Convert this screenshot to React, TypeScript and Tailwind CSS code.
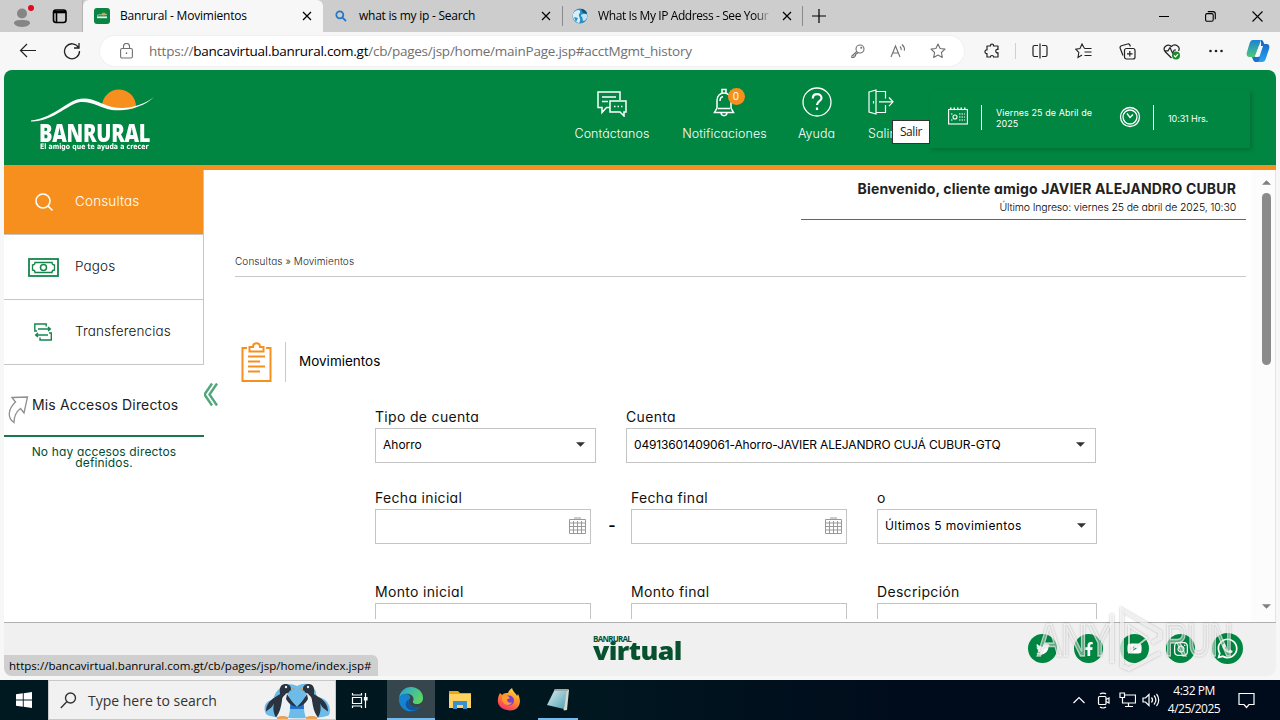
import type { ReactNode } from "react";
import clsx from "clsx";
import {
  FaTwitter,
  FaFacebookF,
  FaYoutube,
  FaInstagram,
  FaWhatsapp,
} from "react-icons/fa";

interface IconProps {
  className?: string;
}

interface SvgProps extends IconProps {
  w: number;
  h: number;
  sw?: number;
  children: ReactNode;
}

// Stroke-only icon, drawn at 1:1 pixel size
const Line = ({ w, h, sw = 1, className, children }: SvgProps) => (
  <svg
    width={w}
    height={h}
    viewBox={`0 0 ${w} ${h}`}
    fill="none"
    stroke="currentColor"
    strokeWidth={sw}
    className={clsx("shrink-0", className)}
  >
    {children}
  </svg>
);

const CloseIcon = ({ className }: IconProps) => (
  <Line w={10} h={10} sw={1.2} className={className}>
    <path d="M1 1 9 9M9 1 1 9" />
  </Line>
);

const Caret = ({ className }: IconProps) => (
  <svg width="9" height="5" viewBox="0 0 9 5" className={className}>
    <path d="M0 0.3h9L4.5 4.8z" fill="currentColor" />
  </svg>
);

/* ---------- browser chrome ---------- */

const TabBar = () => (
  <div className="h-8 flex bg-[#cdcdcd] text-black text-[12px]">
    <div className="w-[83px] flex items-center pl-[13px] border-r border-[#b5b5b5]">
      <svg width="22" height="24" viewBox="0 0 22 24">
        <circle cx="9" cy="9.5" r="5" fill="#858585" />
        <path d="M1 19.5c0-3 2.800-3.500 8-3.500s8 .5 8 3.500c-1.500 2.600-5 3.500-8 3.500s-6.500-.9-8-3.500z" fill="#858585" />
        <circle cx="18" cy="4" r="3" fill="#e00b1c" />
      </svg>
      <Line w={16} h={16} sw={1.6} className="ml-[17px]">
        <rect x="1.500" y="2" width="12.500" height="12.500" rx="2.500" />
        <path d="M1.500 4h12.500" strokeWidth="2.600" />
        <path d="M4.500 3v11" />
      </Line>
    </div>

    <div className="w-[240px] flex items-center bg-[#f7f7f7] rounded-t-md">
      <svg width="16" height="16" viewBox="0 0 16 16" className="ml-[11px]">
        <rect width="16" height="16" rx="3" fill="#0a8543" />
        <path d="M7.500 6.800a2.200 2.200 0 0 1 4.400 0z" fill="#f78f1e" />
        <path d="M3 7.500c3-2 6 .5 10-1" stroke="#cfe6d2" strokeWidth=".7" fill="none" />
        <path d="M3 9.300h10" stroke="#e8f3e9" strokeWidth="1.800" fill="none" />
      </svg>
      <span className="ml-[10px] w-[182px] tracking-[-0.200px]">Banrural - Movimientos</span>
      <CloseIcon />
    </div>

    <div className="w-[239px] flex items-center">
      <svg width="12" height="12" viewBox="0 0 12 12" className="ml-[12px]" fill="none" stroke="#2878c8" strokeWidth="1.800">
        <circle cx="4.800" cy="4.800" r="3.500" />
        <path d="M7.300 7.300 11 11" />
      </svg>
      <span className="ml-[12px] w-[182px] tracking-[-0.240px]">what is my ip - Search</span>
      <CloseIcon />
    </div>

    <div className="my-[6px] w-[241px] flex items-center border-x border-[#8a8a8a]">
      <svg width="18" height="18" viewBox="0 0 18 18" className="ml-[8px]">
        <circle cx="9" cy="9" r="7.500" fill="#2a8fc4" />
        <path d="M2 7c2-4 6-5 7-3s-2 3-1 5 2 5 0 7c-4-1-7-5-6-9z" fill="#d8eef8" />
        <path d="M10 8c2-1 5-2 6 0s-1 5-3 6c-2 0-1-3-2-4s-1-1-1-2z" fill="#bfe3f3" />
        <path d="M10 2c3 0 6 2 6 5l-4-1z" fill="#12577f" />
        <path d="M3 10l4 1-2 4z" fill="#2a8fc4" />
      </svg>
      <span className="ml-[9px] w-[174px] whitespace-nowrap tracking-[-0.400px] [mask-image:linear-gradient(90deg,#000_90%,transparent)]">
        What Is My IP Address - See Your
      </span>
      <CloseIcon className="ml-[10px]" />
    </div>

    <Line w={14} h={14} sw={1.2} className="ml-[9px] mt-[9px]">
      <path d="M7 0v14M0 7h14" />
    </Line>

    <div className="ml-auto flex items-center gap-[36px] pr-[17px]">
      <Line w={10} h={10} sw={1}><path d="M0 5.500h10" /></Line>
      <Line w={11} h={11} sw={1.1}>
        <rect x="0.600" y="2.600" width="7.600" height="7.600" rx="1.500" />
        <path d="M2.800.600H8a2.300 2.300 0 0 1 2.300 2.300v5.300" />
      </Line>
      <Line w={11} h={11} sw={1.1}><path d="M.5.500 10.500 10.500M10.500.500.500 10.500" /></Line>
    </div>
  </div>
);

const StarIcon = ({ className }: IconProps) => (
  <Line w={16} h={16} sw={1.1} className={className}>
    <path d="M8 1l2.100 4.500 4.900.6-3.600 3.400.9 4.900L8 12l-4.300 2.400.9-4.900L1 6.100l4.900-.6z" strokeLinejoin="round" />
  </Line>
);

const Toolbar = () => (
  <div className="h-[38px] flex items-center text-[#222]">
    <Line w={18} h={16} sw={1.2} className="ml-[19px]">
      <path d="M8 1 1.500 7.500 8 14M1.500 7.500H17" />
    </Line>
    <Line w={18} h={18} sw={1.3} className="ml-[26px]">
      <path d="M15.500 5.500A7.500 7.500 0 1 0 16.500 9M16 1v5h-5" />
    </Line>

    <div className="ml-[19px] w-[864px] h-[30px] rounded-full bg-white flex items-center pl-[20px] ring-1 ring-[#f0f0f0] text-[#707070]">
      <Line w={13} h={16} sw={1.1}>
        <rect x="0.600" y="5.500" width="11.800" height="9.500" rx="1.500" />
        <path d="M3.500 5.500V3.500a3 3 0 0 1 6 0v2" />
        <path d="M5.800 10.200h1.400" strokeWidth="1.600" />
      </Line>
      <span className="ml-[16px] w-[702px] text-[13.500px] tracking-[-0.240px]">
        https://<span className="text-black">bancavirtual.banrural.com.gt</span>/cb/pages/jsp/home/mainPage.jsp#acctMgmt_history
      </span>
      <Line w={14} h={14} sw={1.100}>
        <circle cx="9" cy="5" r="4" />
        <circle cx="10.300" cy="3.700" r=".5" />
        <path d="M5.800 7.500.800 12v1.500H3V12h1.500v-1.500L7 8.700" />
      </Line>
      <Line w={16} h={16} sw={1.100} className="ml-[25px]">
        <path d="M1 14 5.500 3 10 14M2.800 10h5.500M10 3.500c1 1 1.400 2.300 1.200 3.700M12 1.500c1.900 1.700 2.800 3.800 2.400 6.200" />
      </Line>
      <StarIcon className="ml-[24px]" />
    </div>

    <Line w={16} h={16} sw={1.200} className="ml-[20px]">
      <path d="M3 3h3.500C6 .3 10 .3 9.500 3H14v3.500c-3-.8-3 4 0 3.200V14H9.500c.4-2-3.400-2-3 0H3v-3.500C.3 11 .3 6.500 3 7z" strokeLinejoin="round" />
    </Line>
    <div className="ml-[15px] w-px h-[16px] bg-[#d0d0d0]" />
    <Line w={16} h={16} sw={1.200} className="ml-[16px]">
      <path d="M6 2.500H2.500a1.500 1.500 0 0 0-1.500 1.500v8a1.500 1.500 0 0 0 1.500 1.500H6M8 .5v15M10 2.500h3.500a1.500 1.500 0 0 1 1.500 1.500v8a1.500 1.500 0 0 1-1.500 1.500H10" />
    </Line>
    <Line w={17} h={16} sw={1.100} className="ml-[27px]">
      <path d="M9.500 5.500 7 1 5 5.500l-4.200.7 3 3.300-.8 5L7 12M9.500 5.500h7M9.500 9h7M9.500 12.500h7" />
    </Line>
    <Line w={17} h={17} sw={1.200} className="ml-[27px]">
      <rect x="5.500" y="5.500" width="10.500" height="10.500" rx="2" />
      <path d="M10.800 8v5.500M8 10.800h5.500M4 12.500 1.200 5.200A2 2 0 0 1 2.500 2.700L8.500 1a2 2 0 0 1 2.500 1.300l.3 1.200" />
    </Line>
    <svg width="18" height="17" viewBox="0 0 18 17" fill="none" stroke="currentColor" strokeWidth="1.200" className="ml-[27px]">
      <path d="M8.500 15 2 8.500C-1 4 5 0 8.500 3.500 12 0 18 3.500 15.500 8M2 7.800h3L7 4.500l2.500 5.500 1.800-3H13" />
      <circle cx="13" cy="12.500" r="4" fill="#1d8a2c" stroke="none" />
      <path d="m11 12.500 1.500 1.500 2.500-2.800" stroke="#fff" />
    </svg>
    <svg width="14" height="4" viewBox="0 0 14 4" fill="currentColor" className="ml-[28px]">
      <circle cx="1.500" cy="2" r="1.300" />
      <circle cx="7" cy="2" r="1.300" />
      <circle cx="12.500" cy="2" r="1.300" />
    </svg>
    <svg width="24" height="24" viewBox="0 0 24 24" className="ml-[23px]">
      <defs>
        <linearGradient id="copilotLeft" x1="0" y1="0" x2="0" y2="1">
          <stop offset="0" stopColor="#1c83d6" />
          <stop offset="1" stopColor="#4fc878" />
        </linearGradient>
        <linearGradient id="copilotRight" x1="0" y1="0" x2="0" y2="1">
          <stop offset="0" stopColor="#1560c4" />
          <stop offset="1" stopColor="#29a4ee" />
        </linearGradient>
      </defs>
      <path d="M15 1c2 0 2.500 2 3.200 4H20c3 0 4 2 3 5l-3 9c-1 3-2 4-4 4h-5l4-15z" fill="url(#copilotRight)" />
      <path d="M7 1h8l-6 17H4c-3 0-4-2-3-5l2.500-8.500C4.300 2 5.300 1 7 1z" fill="url(#copilotLeft)" />
      <path d="M13 7h4l-3.500 10.500H8.800z" fill="#f7f7f7" />
      <path d="M6 18h8l-1 3.500c-.5 1.200-1.300 1.500-3 1.500-2.500 0-3-2.500-4-5z" fill="#1f6fd0" />
    </svg>
  </div>
);

/* ---------- bank page ---------- */

const Logo = () => (
  <div className="ml-[26px] mt-[17px] w-[124px] text-white">
    <svg width="124" height="36" viewBox="0 0 124 36" className="block">
      <path d="M72 19a17 17 0 1 1 34 1c-10 5-23 4-34-1z" fill="#f78f1e" />
      <path d="M1 33.500C20 32 36 16 47 12.500 61 8.500 71 17.500 82 20c15 3 30-1 42-10-9 9-25 14.500-42 13C70 21 60 13 48 15.500 36 19 21 35 1 34.500z" fill="#fff" />
    </svg>
    <div className="ml-[9px] h-[18px] text-[25px] leading-[18px] font-black font-['Open_Sans'] origin-left scale-x-[0.800] tracking-[-0.300px]">
      BANRURAL
    </div>
    <div className="ml-[10px] mt-[1px] text-[7.500px] leading-[9px] font-black font-['DejaVu_Sans'] origin-left whitespace-nowrap scale-x-[0.830]">
      El amigo que te ayuda a crecer
    </div>
  </div>
);

interface NavItemProps {
  label: string;
  width: string;
  children: ReactNode;
}

const NavItem = ({ label, width, children }: NavItemProps) => (
  <div className={clsx("flex flex-col items-center", width)}>
    <div className="h-[36px] flex items-center">{children}</div>
    <span className="mt-[5px] text-[12.500px] leading-[18px] font-light whitespace-nowrap tracking-[0.060px]">{label}</span>
  </div>
);

const Header = () => (
  <header className="h-[100px] relative flex bg-[#008641] border-b-[5px] border-[#f78f1e] text-white">
    <Logo />
    <nav className="ml-[420px] mt-[14px] flex">
      <NavItem label="Contáctanos" width="w-[76px]">
        <Line w={30} h={26} sw={1.500} className="mt-[4px]">
          <path d="M13 16.500H9.500L5 21.500v-5H1V1h22v8M5 6h14M5 10.500h6" />
          <path d="M13 10h16v11h-2v4l-4-4H13z" />
          <path d="M17 15.500h9" strokeDasharray="1.500 2" />
        </Line>
      </NavItem>
      <NavItem label="Notificaciones" width="w-[83px] ml-[33px]">
        <div className="relative">
          <Line w={22} h={29} sw={1.500} className="-ml-[2px]">
            <path d="M9 5V1.500h4V5M4 20v-7.500C4 8 7 5 11 5s7 3 7 7.500V20l2.500 4.500h-19zM8 25c.5 3.500 5.500 3.500 6 0M7 13c0-2.500 1-4 3-4.500M5 20.500h12" />
          </Line>
          <span className="absolute left-[13px] top-0 w-[17px] h-[17px] rounded-full bg-[#f78f1e] text-[10px] leading-[17px] text-center">0</span>
        </div>
      </NavItem>
      <NavItem label="Ayuda" width="w-[37px] ml-[32px]">
        <Line w={30} h={30} sw={1.300}>
          <circle cx="15" cy="15" r="14" />
          <path d="M10.800 11.500c0-6 8.700-5.500 8.700-.5 0 3.500-4.500 3-4.500 7M15 20.500v2.500" strokeWidth="2.200" />
        </Line>
      </NavItem>
      <NavItem label="Salir" width="w-[26px] ml-[33px]">
        <Line w={26} h={27} sw={1.200} className="mt-[1px]">
          <path d="M1 3 8 1v24l-7-2zM8 2.500h9.500v7M17.500 16v7.500H8M11 12.800h14M21 8.500l4 4.300-4 4.300M5.500 12v2.500" />
        </Line>
      </NavItem>
    </nav>

    <div className="ml-[35px] mt-[20px] w-[321px] h-[58px] flex items-center shadow-[2px_2px_4px_rgba(0,0,0,0.180)] text-[9px] leading-[11px]">
      <Line w={20} h={18} sw={1.100} className="ml-[19px] -mt-[6px]">
        <rect x="0.600" y="2.500" width="18.800" height="14.500" />
        <path d="M2 1.500h16" strokeDasharray="1.500 2" strokeWidth="2" />
        <path d="M11 7h6M11 10h6M11 13h6M3 7h2M3 13h2" strokeDasharray="1.500 1" />
        <circle cx="7" cy="10" r="2" />
      </Line>
      <div className="ml-[13px] -mt-[3px] w-px h-[25px] bg-white" />
      <span className="ml-[14px] -mt-[2px] w-[102px] tracking-[0.060px]">Viernes 25 de Abril de 2025</span>
      <Line w={22} h={22} sw={1.300} className="ml-[21px] -mt-[5px]">
        <circle cx="11" cy="11" r="9.500" />
        <circle cx="11" cy="11" r="7" />
        <path d="M8 7.500l3 4 3-3" />
      </Line>
      <div className="ml-[12px] -mt-[3px] w-px h-[25px] bg-white" />
      <span className="ml-[14px] -mt-[2px] tracking-[-0.100px]">10:31 Hrs.</span>
    </div>

    <div className="absolute left-[888px] top-[50px] w-[38px] h-[24px] bg-white border border-[#333] text-[#222] text-[12px] leading-[21px] text-center font-['Open_Sans'] tracking-[-0.400px]">
      Salir
    </div>
  </header>
);

const MoneyIcon = () => (
  <Line w={31} h={19} sw={1.800}>
    <rect x="1" y="1" width="29" height="17" />
    <path d="M7 4.500h17c0 1.500 1 2.500 2.500 2.500v5c-1.500 0-2.500 1-2.500 2.500H7C7 13 6 12 4.500 12V7C6 7 7 6 7 4.500z" strokeWidth="1.300" />
    <circle cx="15.500" cy="9.500" r="3" strokeWidth="1.500" />
  </Line>
);

const TransferIcon = () => (
  <Line w={18} h={18} sw={1.400} className="-ml-[2px]">
    <path d="M3 8H.8V1h11.400v2.500M4 6h12M14 4l2.300 2L14 8M15 10h2.300v7H6v-2.500M14 12H2M4 10l-2.300 2L4 14" />
  </Line>
);

const SearchIcon = () => (
  <Line w={18} h={18} sw={1.600}>
    <circle cx="8" cy="8" r="7" />
    <path d="m13 13 4.500 4.500" />
  </Line>
);

const menu = [
  { label: "Consultas", icon: <SearchIcon />, active: true },
  { label: "Pagos", icon: <MoneyIcon />, active: false },
  { label: "Transferencias", icon: <TransferIcon />, active: false },
];

const Sidebar = () => (
  <aside className="w-[200px] shrink-0">
    <ul>
      {menu.map((item) => (
        <li
          key={item.label}
          className={clsx(
            "h-[65px] flex items-center border-b border-r border-[#c6c6c6] text-[13.500px] font-light tracking-[0.150px]",
            item.active ? "bg-[#f78f1e] text-white" : "text-[#111]"
          )}
        >
          <span className={clsx("w-[79px] flex justify-center", item.active ? "text-white" : "text-[#15854c]")}>
            {item.icon}
          </span>
          <span className="-ml-[8px] -mt-[2px]">{item.label}</span>
        </li>
      ))}
    </ul>
    <div className="h-[72px] flex items-center border-b-2 border-[#18794a] text-[#222]">
      <Line w={21} h={28} sw={1.300} className="ml-[4px] mt-[20px] text-[#8f8f8f]">
        <path d="M4 1.500 19.500 1l-3.500 16-3.500-4.500c-4 3-6.500 7-6.500 14C-1 22 0 13 7.500 6z" />
      </Line>
      <span className="ml-[3px] mt-[9px] text-[14px] tracking-[0.150px]">Mis Accesos Directos</span>
    </div>
    <p className="mt-[9px] px-[24px] text-center text-[12px] leading-[11px] tracking-[0.150px] text-[#004c30]">
      No hay accesos directos definidos.
    </p>
  </aside>
);

const ClipboardIcon = () => (
  <Line w={31} h={40} sw={2} className="text-[#f78f1e]">
    <path d="M6 6H1.500v33h28V6H25M8.500 5h3.500c0-5 7-5 7 0h3.500v4.500h-14zM7 14.500h17M7 19.500h12M7 24.500h17M7 29.500h12" />
  </Line>
);

const CalendarIcon = () => (
  <Line w={17} h={17} sw={1} className="text-[#999]">
    <path d="M.5 2.500h16v14H.5zM.5 6h16M.5 9.500h16M.5 13h16M4.500 4v12.500M8.500 4v12.500M12.500 4v12.500M5 1h7" />
  </Line>
);

interface FieldProps {
  label: string;
  width: string;
  value?: string;
  valueTracking?: string;
  calendar?: boolean;
}

const Field = ({ label, width, value, valueTracking, calendar = false }: FieldProps) => (
  <div className={clsx("shrink-0", width)}>
    <label className="block h-[22px] text-[14px] leading-[22px] text-[#111] tracking-[0.320px]">{label}</label>
    <div className="h-[35px] flex items-center justify-between border border-[#c4c4c4] bg-white pl-[7px] pr-[10px] text-[12px] text-black">
      <span className={clsx("-mt-[2px]", valueTracking)}>{value}</span>
      {value && <Caret className="mr-0 -mt-[3px] text-[#333]" />}
      {calendar && <span className="-mr-[6px] -mt-[2px]"><CalendarIcon /></span>}
    </div>
  </div>
);

const Content = () => (
  <main className="relative w-[1047px] h-[449px] shrink-0 pl-[31px] overflow-hidden">
    <svg width="15" height="23" viewBox="0 0 15 23" fill="none" stroke="#4fa77b" strokeWidth="2.400" className="absolute -left-[1px] top-[213px]">
      <path d="M9 .5 1.500 11.500 9 22.500M14 .5 6.500 11.500 14 22.500" />
    </svg>

    <div className="ml-auto mr-[5px] w-[445px] h-[50px] pt-[10px] pr-[10px] border-b border-b-[#1c8a66] text-right text-[#222]">
      <h1 className="text-[14px] leading-[18px] font-bold tracking-[0.160px]">
        Bienvenido, cliente amigo JAVIER ALEJANDRO CUBUR
      </h1>
      <p className="text-[10.500px] leading-[19px] font-light text-black tracking-[-0.150px]">
        Último Ingreso: viernes 25 de abril de 2025, 10:30
      </p>
    </div>

    <div className="mr-[5px] h-[57px] pt-[33px] border-b border-[#c9c9c9] text-[10px] leading-[17px] font-light text-[#222] tracking-[0.090px]">
      Consultas » Movimientos
    </div>

    <div className="mt-[65px] flex items-center">
      <span className="ml-[6px]"><ClipboardIcon /></span>
      <div className="ml-[13px] w-px h-[40px] bg-[#c9c9c9]" />
      <h2 className="ml-[13px] -mt-[2px] text-[13.500px] text-black">Movimientos</h2>
    </div>

    <form className="ml-[140px] mt-[24px]">
      <div className="flex gap-[30px]">
        <Field label="Tipo de cuenta" width="w-[221px]" value="Ahorro" />
        <Field
          label="Cuenta"
          width="w-[470px]"
          value="04913601409061-Ahorro-JAVIER ALEJANDRO CUJÁ CUBUR-GTQ"
          valueTracking="tracking-[-0.150px]"
        />
      </div>
      <div className="mt-[24px] flex">
        <Field label="Fecha inicial" width="w-[216px]" calendar />
        <span className="w-[40px] pl-[2px] pt-[26px] text-center text-[16px] font-semibold">-</span>
        <Field label="Fecha final" width="w-[216px]" calendar />
        <div className="w-[30px]" />
        <Field
          label="o"
          width="w-[220px]"
          value="Últimos 5 movimientos"
          valueTracking="tracking-[0.370px]"
        />
      </div>
      <div className="mt-[37px] flex">
        <Field label="Monto inicial" width="w-[216px]" />
        <div className="w-[40px]" />
        <Field label="Monto final" width="w-[216px]" />
        <div className="w-[30px]" />
        <Field label="Descripción" width="w-[220px]" />
      </div>
    </form>
  </main>
);

const Scrollbar = () => (
  <div className="w-[25px] flex flex-col items-center pl-[7px] bg-[#fcfcfc] border-r border-[#e4e4e4] text-[#808080]">
    <Caret className="mt-[10px] rotate-180" />
    <div className="mt-[8px] w-[9px] h-[172px] rounded-full bg-[#8b8b8b]" />
    <Caret className="mt-auto mb-[13px]" />
  </div>
);

const socials = [
  { name: "twitter", icon: <FaTwitter size={14} /> },
  { name: "facebook", icon: <FaFacebookF size={14} /> },
  { name: "youtube", icon: <FaYoutube size={15} /> },
  { name: "instagram", icon: <FaInstagram size={16} /> },
  { name: "whatsapp", icon: <FaWhatsapp size={23} /> },
];

const Watermark = () => (
  <div className="absolute right-[45px] -top-[17px] h-[66px] flex items-center text-[46px] leading-none font-['Liberation_Sans'] text-white/40 [-webkit-text-stroke:1.500px_rgba(255,255,255,0.600)] [filter:drop-shadow(0_0_1px_rgba(0,0,0,0.350))]">
    <span className="w-[70px] mt-[2px] origin-left scale-x-[0.790]">ANY</span>
    <svg width="56" height="66" viewBox="0 0 56 66" fill="none" stroke="#fff" strokeOpacity="0.700" strokeWidth="4">
      <path d="M5 8v49M15 15v45l7 3 31-16M15 45V4l38 22v6l-8 5" />
      <path d="M22 20v26l18-14z" strokeWidth="2" />
    </svg>
    <span className="w-[66px] mt-[2px] ml-[2px] origin-left scale-x-[0.680]">RUN</span>
  </div>
);

const Footer = () => (
  <footer className="relative h-[54px] flex items-start bg-[#f0f0f0] border-t border-[#b0b0b0]">
    <div className="ml-[589px] mt-[13px] w-[88px] text-[#07512f] font-['Open_Sans']">
      <div className="h-[6px] text-[8px] leading-[6px] font-bold tracking-[-0.750px]">BANRURAL</div>
      <div className="h-[20px] text-[24px] leading-[18px] font-black tracking-[-0.500px] origin-left scale-x-[1.110]">virtual</div>
    </div>
    <div className="ml-auto mr-[33px] mt-[10px] flex items-center gap-[17px] text-white">
      {socials.map(({ name, icon }) => (
        <span
          key={name}
          className={clsx(
            "flex items-center justify-center rounded-full bg-[#008641]",
            name === "whatsapp" ? "size-[31px]" : "size-[29px]"
          )}
        >
          {icon}
        </span>
      ))}
    </div>
    <Watermark />
    <div className="absolute left-0 bottom-0 w-[374px] h-[21px] pl-[5px] rounded-tr-md rounded-bl-md bg-[#cfcfcf] text-black text-[11.500px] leading-[21px] whitespace-nowrap font-['Open_Sans'] tracking-[0.020px]">
      https://bancavirtual.banrural.com.gt/cb/pages/jsp/home/index.jsp#
    </div>
  </footer>
);

/* ---------- windows taskbar ---------- */

// One penguin facing right; mirrored for its mate
const Penguin = () => (
  <>
    <path d="M17 11c-5 6-8 16-4 26h11c3-8 3-18-1-26z" fill="#eef1f4" />
    <path d="M16 13c-1-6 1-10 5-10 4 0 5.500 2 6 4L31 8.500l-5 1c-1 2-2 3-4 3 -1 2-4 3-4 7-1 6-2 12-6 17-3-5-3-10-2-14-2 4-4 5-8 8 0-6 3-10 7-13 3-2 5-3 7-4.500z" fill="#2a3440" />
    <path d="M23 13c3 5 6 9 10 13-5-1-8-3-11-8z" fill="#2a3440" />
    <circle cx="22" cy="6" r="1.200" fill="#eef1f4" />
    <path d="M27 6.500 31.500 8.700l-4.500.3zM13 36c3-1.500 8-1.500 11 0v2H13z" fill="#e9a25a" />
  </>
);

const Penguins = () => (
  <svg width="66" height="38" viewBox="0 0 66 38" className="ml-auto mr-[5px]">
    <path d="M2 33C-2 25 3 19 9 19 12 6 23 0 33 5c12-7 21 3 19 11 12 0 16 11 13 18-3 4-58 5-63-1z" fill="#6dbbe8" />
    <path d="M25 18l8 8 8-8 2 10H25z" fill="#1e72ce" />
    <Penguin />
    <g transform="matrix(-1 0 0 1 66 0)">
      <Penguin />
    </g>
  </svg>
);

const EdgeIcon = () => (
  <svg width="26" height="26" viewBox="0 0 26 26">
    <defs>
      <linearGradient id="edgeTop" x1="0" y1="0" x2="1" y2="0.500">
        <stop offset="0" stopColor="#249fe0" />
        <stop offset="1" stopColor="#5bd565" />
      </linearGradient>
    </defs>
    <path d="M1 12C2 5 7 1 13 1c7 0 12 5 12 11 0 4-3 6-6 6-4 0-5-2-3.500-4C16 9 11 7 7 8c-3 .5-5 2-6 4z" fill="url(#edgeTop)" />
    <path d="M1 12c2-4 7-5 10-3 2 1.500 1 3 0 5-1.500 4 3 9 11 7-4 5-12 6-17 1.500C2 20 .500 16 1 12z" fill="#1683d0" />
    <path d="M11 13.500c-2 4 2 9 11 7.500-4 4.500-10 4.500-13 1-2.500-3-1-7.500 2-8.500z" fill="#0f559f" />
  </svg>
);

const FolderIcon = () => (
  <svg width="22" height="20" viewBox="0 0 22 20">
    <path d="M0 1h9l2 2h11v15H0z" fill="#e9a61c" />
    <path d="M0 4h22v14H0z" fill="#fdd25f" />
    <path d="M4 19v-8h14v8h-4v-4H8v4z" fill="#3b8fd0" />
  </svg>
);

const FirefoxIcon = () => (
  <svg width="24" height="24" viewBox="0 0 24 24">
    <defs>
      <linearGradient id="fox" x1="0.800" y1="0" x2="0.300" y2="1">
        <stop offset="0" stopColor="#ffe14a" />
        <stop offset="0.500" stopColor="#ff8a2a" />
        <stop offset="1" stopColor="#f5306e" />
      </linearGradient>
    </defs>
    <path d="M3 5l2 2c2-2 4-2 6-2 1-3 3-4 4-5 1 4 4 5 5 8l1-2c2 4 3 9 0 13s-8 4-11 3C3 21 0 16 1 11c0-2 1-4 2-6z" fill="url(#fox)" />
    <circle cx="12" cy="12.500" r="5" fill="#7a3fd0" />
    <path d="M5 9c3-2 6-1 7 0 1.500 1 0 2-2 2.500 0 3 3 4 5 2.500-1 4-7 4-9 0-1-2-1-3-1-5z" fill="#ff9a2e" />
  </svg>
);

const NotepadIcon = () => (
  <svg width="24" height="24" viewBox="0 0 24 24">
    <defs>
      <linearGradient id="pad" x1="0" y1="0" x2="1" y2="1">
        <stop offset="0" stopColor="#dff1f3" />
        <stop offset="1" stopColor="#4e9fb0" />
      </linearGradient>
    </defs>
    <path d="M9 2h13l1 1-2 20-3 .500z" fill="#d8d8cc" />
    <path d="M9 2h12l-3 20L1 18z" fill="url(#pad)" />
    <path d="M9 2h13v2H8z" fill="#9aa8a8" />
  </svg>
);

const Taskbar = () => (
  <div className="mt-auto h-10 flex items-stretch bg-[linear-gradient(90deg,#00181f,#001720_45%,#000c1c_70%,#000b1c)] text-white">
    <div className="w-12 flex items-center justify-center">
      <svg width="16" height="16" viewBox="0 0 16 16" fill="#fff">
        <path d="M0 2.200 6.800 1.300v6.200H0zM7.700 1.200 16 0v7.500H7.700zM0 8.400h6.800v6.300L0 13.800zM7.700 8.400H16V16l-8.300-1.200z" />
      </svg>
    </div>
    <div className="w-[288px] flex items-center bg-[#f1f1f1] border border-[#c8c8c8] text-[#333]">
      <Line w={17} h={17} sw={1.400} className="ml-[11px]">
        <circle cx="10.500" cy="6" r="5" />
        <path d="M7 9.500.800 16" />
      </Line>
      <span className="ml-[11px] text-[14px]">Type here to search</span>
      <Penguins />
    </div>
    <div className="w-[51px] flex items-center justify-center">
      <Line w={17} h={17} sw={1.200} className="-ml-[4px]">
        <path d="M1.500 1v2h9V1M1.500 16v-2h9v2M1.500 5.500h9v6h-9zM14.500 1v15" />
        <path d="M13.500 5.500h2.500v2.500h-2.500z" fill="currentColor" />
      </Line>
    </div>
    <div className="w-[48px] flex items-center justify-center bg-[#35474d] border-b-2 border-[#76b9ed]"><EdgeIcon /></div>
    <div className="w-[49px] flex items-center justify-center"><FolderIcon /></div>
    <div className="w-[49px] flex items-center justify-center"><FirefoxIcon /></div>
    <div className="ml-[5px] w-[40px] flex items-center justify-center border-b-2 border-[#76b9ed]"><NotepadIcon /></div>

    <div className="ml-auto flex items-center pr-[25px]">
      <Line w={12} h={8} sw={1.200}><path d="m.5 7 5.500-5.500L11.500 7" /></Line>
      <Line w={13} h={17} sw={1.200} className="ml-[12px]">
        <rect x="1.500" y="4.500" width="7.500" height="8" rx="1" />
        <path d="m9 7.500 3-1.500v5L9 9.500M3 2c1.500-1.300 4.500-1.300 6 0M3 15c1.500 1.300 4.500 1.300 6 0" />
      </Line>
      <Line w={17} h={16} sw={1.200} className="ml-[9px]">
        <path d="M5.500 3h11v8H3.500V7M9.500 11v3.500M6 14.500h8M1 1h4.500v4.500H1zM3.500 5.500V8" />
      </Line>
      <Line w={18} h={14} sw={1.200} className="ml-[6px]">
        <path d="M1 5h2.500L7 1.500v11L3.500 9H1zM9.500 4.500c1.300 1.500 1.300 3.500 0 5M12 2.500c2.300 2.700 2.300 6.300 0 9M14.500 1c3 3.500 3 8.500 0 12" />
      </Line>
      <div className="ml-[4px] w-[60px] text-center text-[12px] leading-[18px] tracking-[-0.500px]">
        <div>4:32 PM</div>
        <div>4/25/2025</div>
      </div>
      <Line w={17} h={17} sw={1.200} className="ml-[14px]">
        <path d="M1 1.500h15v11h-5L8.500 15.500 6 12.500H1z" />
      </Line>
    </div>
  </div>
);

export default function App() {
  return (
    <div className="w-[1280px] h-[720px] flex flex-col overflow-hidden bg-[#f7f7f7] font-['Open_Sans',sans-serif]">
      <TabBar />
      <Toolbar />
      <div className="mx-[4px] h-[606px] flex flex-col rounded-lg overflow-hidden bg-white font-['Inter',sans-serif] [font-feature-settings:'cv11']">
        <Header />
        <div className="h-[452px] flex">
          <Sidebar />
          <Content />
          <Scrollbar />
        </div>
        <Footer />
      </div>
      <Taskbar />
    </div>
  );
}
